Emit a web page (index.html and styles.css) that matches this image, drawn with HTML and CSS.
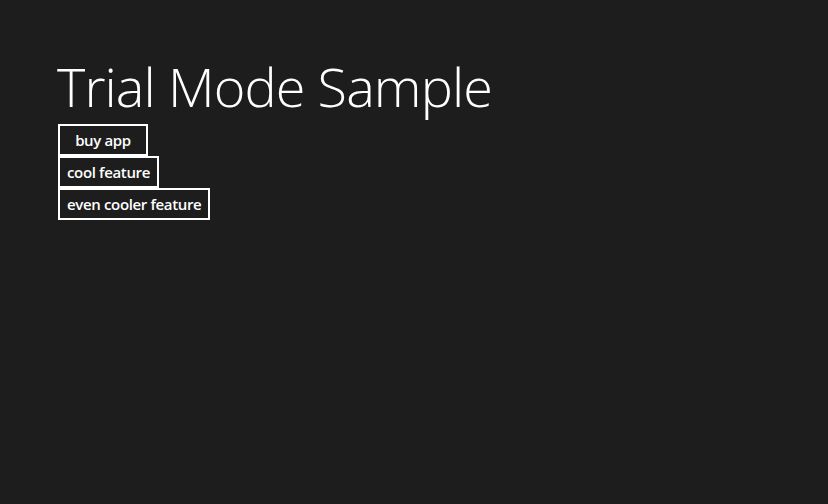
FILE: index.html
```html
<!DOCTYPE html>
<html>
<head>
<meta charset="utf-8">
<link rel="stylesheet" href="styles.css">
</head>
<body>
<main class="page">
  <h1 class="title">Trial Mode Sample</h1>
  <div class="buttons">
    <button class="btn btn-wide">buy app</button>
    <button class="btn">cool feature</button>
    <button class="btn">even cooler feature</button>
  </div>
</main>
</body>
</html>
```
FILE: styles.css
```css
html, body {
  margin: 0;
  padding: 0;
  background: #1d1d1d;
  height: 100%;
}
.page {
  padding: 52px 0 0 58px;
  display: flex;
  flex-direction: column;
  align-items: flex-start;
}
.title {
  margin: 0;
  font-family: "Open Sans", sans-serif;
  font-weight: 300;
  font-size: 54px;
  line-height: 68px;
  color: #ffffff;
  letter-spacing: -0.9px;
  margin-left: -1px;
  height: 72px;
}
.buttons {
  display: flex;
  flex-direction: column;
  align-items: flex-start;
}
.btn {
  box-sizing: border-box;
  height: 32px;
  padding: 0 7px;
  border: 2px solid #ffffff;
  background: #1d1d1d;
  color: #ffffff;
  font-family: "Open Sans", sans-serif;
  font-weight: 600;
  font-size: 15px;
  letter-spacing: -0.35px;
  line-height: 26px;
  cursor: pointer;
}
.btn-wide {
  min-width: 90px;
}
```
